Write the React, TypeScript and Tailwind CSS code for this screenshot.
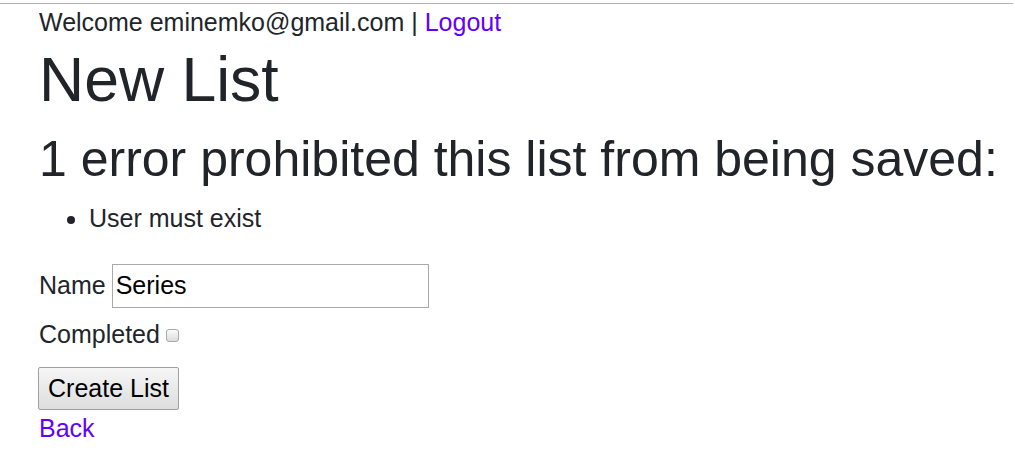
import React from "react";

const font = { fontFamily: '"Liberation Sans", Arial, sans-serif' };

export default function App() {
  return (
    <div className="min-h-[467px] bg-white text-[#212529] text-[25px] leading-[37.5px]" style={font}>
      <div className="h-[3px]" />
      <div className="border-t border-[#b4b4b4] mr-[2px]" />
      <div className="pl-[39px]">
        <p>
          Welcome eminemko@gmail.com | <a href="#" className="text-[#6200ff]">Logout</a>
        </p>
        <h1 className="mb-[12.5px] text-[62.5px] leading-[75px] font-normal">New List</h1>
        <h2 className="mb-[11px] text-[50px] leading-[60px] font-normal">1 error prohibited this list from being saved:</h2>
        <ul className="list-disc pl-[50px] mb-[26px]">
          <li>User must exist</li>
        </ul>
        <div className="flex items-center h-[44px]">
          <label className="mr-[6px]">Name</label>
          <input
            type="text"
            defaultValue="Series"
            className="w-[317px] h-[44px] border border-[#a9a9a9] px-[3px] text-[25px] text-black outline-none"
            style={font}
          />
        </div>
        <div className="flex items-center h-[37.5px] mt-[8.5px]">
          <label className="mr-[6px]">Completed</label>
          <span className="inline-block w-[13px] h-[13px] mt-[1px] rounded-[3px] border border-[#a8a8a8] bg-gradient-to-b from-[#fafafa] to-[#dcdcdc]" />
        </div>
        <div className="mt-[13px] -ml-[1px]">
          <button className="h-[43px] w-[141px] border border-[#a0a0a0] rounded-[2px] bg-gradient-to-b from-[#f6f6f6] to-[#dddddd] text-black text-[25px] leading-[30px]" style={font}>
            Create List
          </button>
        </div>
        <a href="#" className="block text-[#6200ff] leading-[37.5px] w-fit">Back</a>
      </div>
    </div>
  );
}
